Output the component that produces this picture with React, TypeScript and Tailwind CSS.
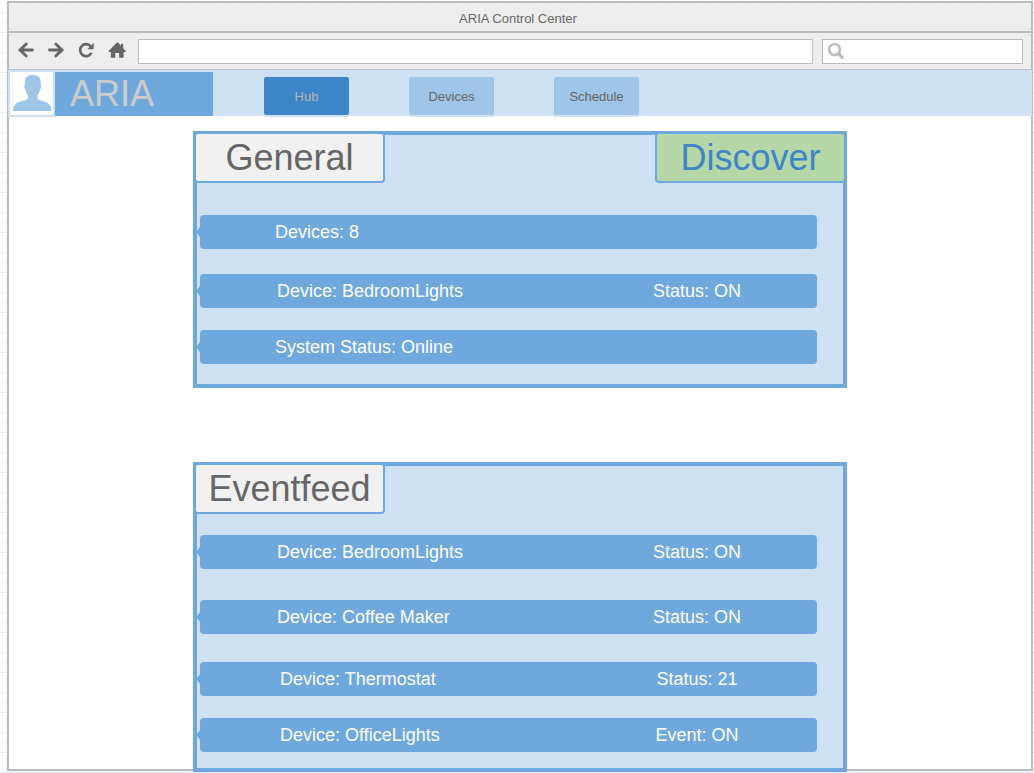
import type { ReactNode } from "react";

type Entry = { label: string; value?: string; place: string };

const general: Entry[] = [
  { label: "Devices: 8", place: "mt-8 pl-[75px]" },
  { label: "Device: BedroomLights", value: "Status: ON", place: "mt-[25px] pl-[77px]" },
  { label: "System Status: Online", place: "mt-[22px] pl-[75px]" },
];

const events: Entry[] = [
  { label: "Device: BedroomLights", value: "Status: ON", place: "mt-[21px] pl-[77px]" },
  { label: "Device: Coffee Maker", value: "Status: ON", place: "mt-[31px] pl-[77px]" },
  { label: "Device: Thermostat", value: "Status: 21", place: "mt-7 pl-20" },
  { label: "Device: OfficeLights", value: "Event: ON", place: "mt-[22px] pl-20" },
];

function Row({ label, value, place }: Entry) {
  return (
    <li
      className={`relative ml-[3px] mr-[26px] flex h-[34px] items-center justify-between rounded bg-[#6fa8dc] pr-15 text-lg leading-6 text-white ${place}`}
    >
      <svg className="absolute -left-1 top-3 h-[10px] w-1 fill-[#6fa8dc]" viewBox="0 0 4 10" aria-hidden="true">
        <path d="M4 0v10L0 5z" />
      </svg>
      <span>{label}</span>
      {value && <span className="w-30 text-center">{value}</span>}
    </li>
  );
}

function Panel({ title, rows, action, className }: { title: string; rows: Entry[]; action?: ReactNode; className: string }) {
  return (
    <section className={`mx-auto w-full max-w-[654px] border-4 border-[#6fa8dc] bg-[#cfe2f3] ${className}`}>
      <header className="-mx-[3px] -mt-[3px] flex justify-between">
        <h2 className="flex h-[51px] w-[191px] items-center justify-center rounded border-2 border-[#6fa8dc] bg-[#f1f1f1] text-4xl text-[#666]">
          {title}
        </h2>
        {action}
      </header>
      <ul>
        {rows.map((row, i) => (
          <Row key={i} {...row} />
        ))}
      </ul>
    </section>
  );
}

function ToolButton({ label, children }: { label: string; children: ReactNode }) {
  return (
    <button aria-label={label}>
      <svg className="block size-5 fill-[#666] stroke-[#666]" viewBox="0 0 20 20" strokeWidth="0" aria-hidden="true">
        {children}
      </svg>
    </button>
  );
}

const tab = "h-[42px] w-[89px] rounded border-2 border-[#cfe2f3] pt-0.5 text-[13px] leading-4";

export default function App() {
  return (
    <div className="min-h-screen bg-white bg-[linear-gradient(#e8e8fc_1px,transparent_1px),linear-gradient(90deg,#e8e8fc_1px,transparent_1px),linear-gradient(#f6f6fe_1px,transparent_1px),linear-gradient(90deg,#f6f6fe_1px,transparent_1px)] bg-[size:20px_20px] bg-[position:0_12px,16px_0,0_2px,6px_0] pt-px pr-px pb-0.5 pl-[7px] font-['Liberation_Sans',Arial,sans-serif]">
      <div className="border-2 border-[#bbb] bg-white">
        <div className="flex h-[30px] items-center justify-center border-b-2 border-[#bbb] bg-[#eee] pt-1 pr-1 text-[13px] text-[#666]">
          <h1>ARIA Control Center</h1>
        </div>
        <div className="flex h-[37px] items-center border-b border-[#bbb] bg-[#eee] pr-2 pl-[7px] text-[#666]">
          <div className="flex items-center gap-[10px] pb-0.5">
            <ToolButton label="Back">
              <path d="M16.500 10H4.500M10.200 4 4 10l6.200 6" fill="none" strokeWidth="2.900" strokeLinecap="round" />
            </ToolButton>
            <ToolButton label="Forward">
              <path d="M3.500 10h12M9.800 4 16 10l-6.200 6" fill="none" strokeWidth="2.900" strokeLinecap="round" />
            </ToolButton>
            <ToolButton label="Reload">
              <path d="M14.700 6.300A6 6 0 1 0 15.500 12.800" fill="none" strokeWidth="2.600" />
              <path d="M17.700 2.800v6.400h-6.400z" />
            </ToolButton>
            <ToolButton label="Home">
              <path d="M11.200 2.200 2.600 11c-.3.400 0 .9.500.9h1.700v5.800h4.500v-4.600h3.800v4.600h4.500v-5.800h1.700c.5 0 .8-.5.500-.9l-2.600-2.700V3.700h-2.300v2.100l-2.900-3.400z" />
            </ToolButton>
          </div>
          <input aria-label="Address" type="text" className="ml-3 h-[25px] min-w-0 flex-1 border border-[#bbb] bg-white px-2 text-[13px] outline-none" />
          <label className="ml-[9px] flex h-[25px] w-[201px] items-center border border-[#bbb] bg-white pl-[5px]">
            <svg className="size-4 shrink-0 fill-none stroke-[#bbb]" viewBox="0 0 16 16" aria-hidden="true">
              <circle cx="6.500" cy="6.500" r="5.400" strokeWidth="2.500" />
              <path d="M11 11 14.300 14.300" strokeWidth="3.200" strokeLinecap="round" />
            </svg>
            <input aria-label="Search" type="text" className="w-full min-w-0 px-2 text-[13px] outline-none" />
          </label>
        </div>
        <nav className="-mx-px flex h-[46px] items-start bg-[#cfe2f3]">
          <div className="size-[47px] border-2 border-[#cfe2f3] bg-white">
            <svg className="size-full fill-[#9fc5e8]" viewBox="0 0 43 43" aria-hidden="true">
              <path d="M22.500 3c5.500 0 8.200 2.500 8.200 7v3.200c.9.500.6 3.200-.5 4.200-.6 2.600-1.400 4.200-2.700 5.800v3c1.500 2.200 5 2.800 8 3.800 4 1.400 6 4 6 9H3c0-5 2-7.600 6-9 3-1 7.500-1.600 9-3.800v-3c-1.300-1.600-2.100-3.200-2.700-5.800-1.100-1-1.400-3.700-.5-4.200V10c0-4.500 2.200-7 7.700-7z" />
            </svg>
          </div>
          <div className="mt-0.5 flex h-11 w-[158px] items-center bg-[#6fa8dc] pl-[15px] text-4xl text-[#ccc]">ARIA</div>
          <div className="mt-[5px] ml-[49px] flex gap-14">
            <button className={`${tab} bg-[#3d85c6] text-[#b7b7b7]`}>Hub</button>
            <button className={`${tab} bg-[#9fc5e8] text-[#666]`}>Devices</button>
            <button className={`${tab} bg-[#9fc5e8] text-[#666]`}>Schedule</button>
          </div>
        </nav>
        <main className="px-4 pt-[15px]">
          <Panel
            title="General"
            rows={general}
            className="pb-5"
            action={
              <button className="h-[51px] w-[191px] rounded border-2 border-[#6fa8dc] bg-[#b6d7a8] text-4xl text-[#3d85c6]">
                Discover
              </button>
            }
          />
          <Panel title="Eventfeed" rows={events} className="relative mt-[74px] -mb-[3px] pb-4" />
        </main>
      </div>
    </div>
  );
}
